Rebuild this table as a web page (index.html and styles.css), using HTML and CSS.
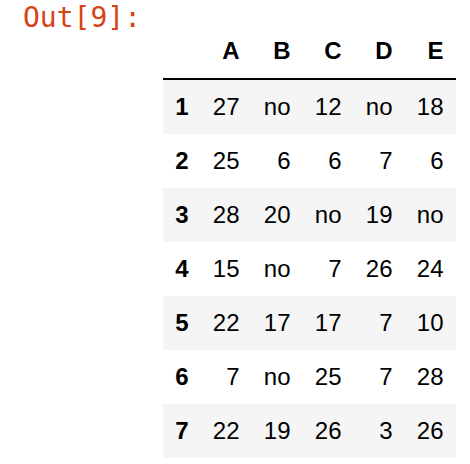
FILE: index.html
```html
<!DOCTYPE html>
<html>
<head>
<meta charset="utf-8">
<link rel="stylesheet" href="styles.css">
</head>
<body>
<div class="cell">
  <div class="prompt">Out[9]:</div>
  <div class="output">
    <table class="dataframe">
      <thead>
        <tr><th class="idx"></th><th>A</th><th>B</th><th>C</th><th>D</th><th>E</th></tr>
      </thead>
      <tbody>
        <tr><th class="idx">1</th><td>27</td><td>no</td><td>12</td><td>no</td><td>18</td></tr>
        <tr><th class="idx">2</th><td>25</td><td>6</td><td>6</td><td>7</td><td>6</td></tr>
        <tr><th class="idx">3</th><td>28</td><td>20</td><td>no</td><td>19</td><td>no</td></tr>
        <tr><th class="idx">4</th><td>15</td><td>no</td><td>7</td><td>26</td><td>24</td></tr>
        <tr><th class="idx">5</th><td>22</td><td>17</td><td>17</td><td>7</td><td>10</td></tr>
        <tr><th class="idx">6</th><td>7</td><td>no</td><td>25</td><td>7</td><td>28</td></tr>
        <tr><th class="idx">7</th><td>22</td><td>19</td><td>26</td><td>3</td><td>26</td></tr>
      </tbody>
    </table>
  </div>
</div>
</body>
</html>
```

FILE: styles.css
```css
html, body {
  margin: 0;
  padding: 0;
  background: #ffffff;
}

.cell {
  display: flex;
  align-items: flex-start;
}

.prompt {
  width: 141px;
  flex: none;
  text-align: right;
  padding-top: 1px;
  font-family: "DejaVu Sans Mono", "Liberation Mono", monospace;
  font-size: 28px;
  line-height: normal;
  color: #D84315;
}

.output {
  padding-left: 22px;
  padding-top: 24px;
}

.dataframe {
  border-collapse: separate;
  border-spacing: 0;
  font-family: "Liberation Sans", Arial, sans-serif;
  font-size: 24px;
  color: #000000;
}

.dataframe th,
.dataframe td {
  padding: 12px;
  line-height: 30px;
  text-align: right;
  vertical-align: middle;
  white-space: nowrap;
  width: 27px;
}

.dataframe th {
  font-weight: bold;
}

.dataframe .idx {
  width: 13.5px;
}

.dataframe thead th {
  border-bottom: 2px solid #000000;
}

.dataframe tbody tr:nth-child(odd) {
  background: #f5f5f5;
}
```
